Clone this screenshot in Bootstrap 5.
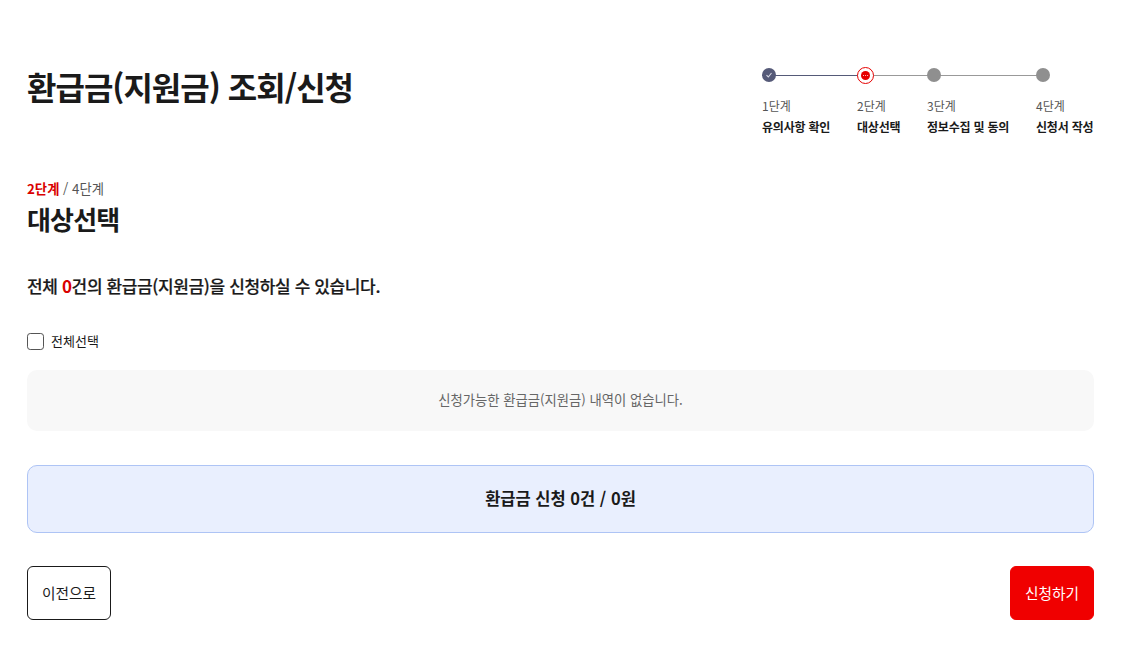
<!DOCTYPE html>
<html lang="ko"><head><meta charset="utf-8">
<link href="https://cdn.jsdelivr.net/npm/bootstrap@5.3.0/dist/css/bootstrap.min.css" rel="stylesheet">
<style>
html,body{background:#fff;overflow:hidden}
body{font-family:"Noto Sans CJK KR","Noto Sans",sans-serif;color:#1a1a1a;height:663px}
.page-wrap{padding:66px 53px 0 27px}
.page-title{font-size:32px;font-weight:700;letter-spacing:-1px;line-height:40px;margin:0}
.step-track{width:332px;height:142px;position:relative;margin-top:-16px;flex:none}
.step-line{position:absolute;top:25px;height:1px;background:#999}
.step-line.done{background:#555a78;left:0;width:96px}
.step-line.todo{left:96px;width:186px}
.step-dot{position:absolute;top:18px;width:14px;height:14px;border-radius:50%;background:#8f8f8f}
.step-dot.done{background:#555a78;display:flex;align-items:center;justify-content:center}
.step-dot.now{top:17px;width:17px;height:17px;background:#fff;border:1.5px solid #e60000;display:flex;align-items:center;justify-content:center}
.step-dot.now i{display:block;width:9px;height:9px;border-radius:50%;background:#e60000;position:relative}
.step-dot.now i::after{content:"";position:absolute;left:1.6px;top:4px;width:1.2px;height:1.2px;background:#fff;border-radius:50%;box-shadow:2.1px 0 #fff,4.2px 0 #fff}
.pos-1{left:0}.pos-2{left:95px}.pos-3{left:165px}.pos-4{left:274px}
.step-txt{position:absolute;top:48px;font-size:12px;line-height:16px;white-space:nowrap;color:#555}
.step-txt b{display:block;margin-top:5px;font-weight:700;color:#1a1a1a;letter-spacing:-.2px}
.step-count{font-size:13.33px;line-height:18px;color:#555;margin-top:-12px}
.step-count b{color:#d90000;font-weight:700}
.sub-title{font-size:26px;font-weight:700;letter-spacing:-.85px;line-height:32px;margin:5px 0 0}
.lead-line{font-size:17px;font-weight:500;line-height:22px;margin:40px 0 0;letter-spacing:-.37px;-webkit-text-stroke:.2px #1a1a1a}
.lead-line em{font-style:normal;color:#d90000;font-weight:700;-webkit-text-stroke:0}
.all-check{margin-top:34px;height:20px;font-size:13px;gap:7px}
.all-check input{width:17px;height:17px;margin:0;border:1px solid #555;border-radius:3px}
.empty-box{margin-top:19px;height:61px;padding-bottom:2px;background:#f8f8f8;border-radius:10px;font-size:13.33px;color:#666}
.sum-box{margin-top:34px;height:68px;padding-bottom:2px;background:#e9effe;border:1px solid #aec4f5;border-radius:10px;font-size:16.5px;font-weight:700}
.btn-row{margin-top:33px}
.act-btn{height:54px;width:84px;border-radius:6px;font-size:14.7px;padding:0;display:flex;align-items:center;justify-content:center}
.act-prev{background:#fff;border:1px solid #1a1a1a;color:#1a1a1a}
.act-next{background:#f00000;border:1px solid #f00000;color:#fff}
</style></head><body>
<div class="page-wrap">
 <div class="d-flex justify-content-between align-items-start">
  <h1 class="page-title">환급금(지원금) 조회/신청</h1>
  <div class="step-track">
   <span class="step-line done"></span>
   <span class="step-line todo"></span>
   <span class="step-dot done pos-1"><svg width="8" height="8" viewBox="0 0 8 8"><path d="M1.5 4.2 3.3 6 6.5 2" fill="none" stroke="#d8dae4" stroke-width="1.1"/></svg></span>
   <span class="step-dot now pos-2"><i></i></span>
   <span class="step-dot pos-3"></span>
   <span class="step-dot pos-4"></span>
   <div class="step-txt pos-1">1단계<b>유의사항 확인</b></div>
   <div class="step-txt pos-2">2단계<b>대상선택</b></div>
   <div class="step-txt pos-3">3단계<b>정보수집 및 동의</b></div>
   <div class="step-txt pos-4">4단계<b>신청서 작성</b></div>
  </div>
 </div>
 <div class="step-count"><b>2단계</b> / 4단계</div>
 <h2 class="sub-title">대상선택</h2>
 <p class="lead-line">전체 <em>0</em>건의 환급금(지원금)을 신청하실 수 있습니다.</p>
 <label class="all-check d-flex align-items-center"><input type="checkbox" class="form-check-input">전체선택</label>
 <div class="empty-box d-flex align-items-center justify-content-center">신청가능한 환급금(지원금) 내역이 없습니다.</div>
 <div class="sum-box d-flex align-items-center justify-content-center">환급금 신청 0건 / 0원</div>
 <div class="btn-row d-flex justify-content-between">
  <button class="btn act-btn act-prev">이전으로</button>
  <button class="btn act-btn act-next">신청하기</button>
 </div>
</div>
<script src="https://cdn.jsdelivr.net/npm/bootstrap@5.3.0/dist/js/bootstrap.bundle.min.js"></script>
</body></html>
